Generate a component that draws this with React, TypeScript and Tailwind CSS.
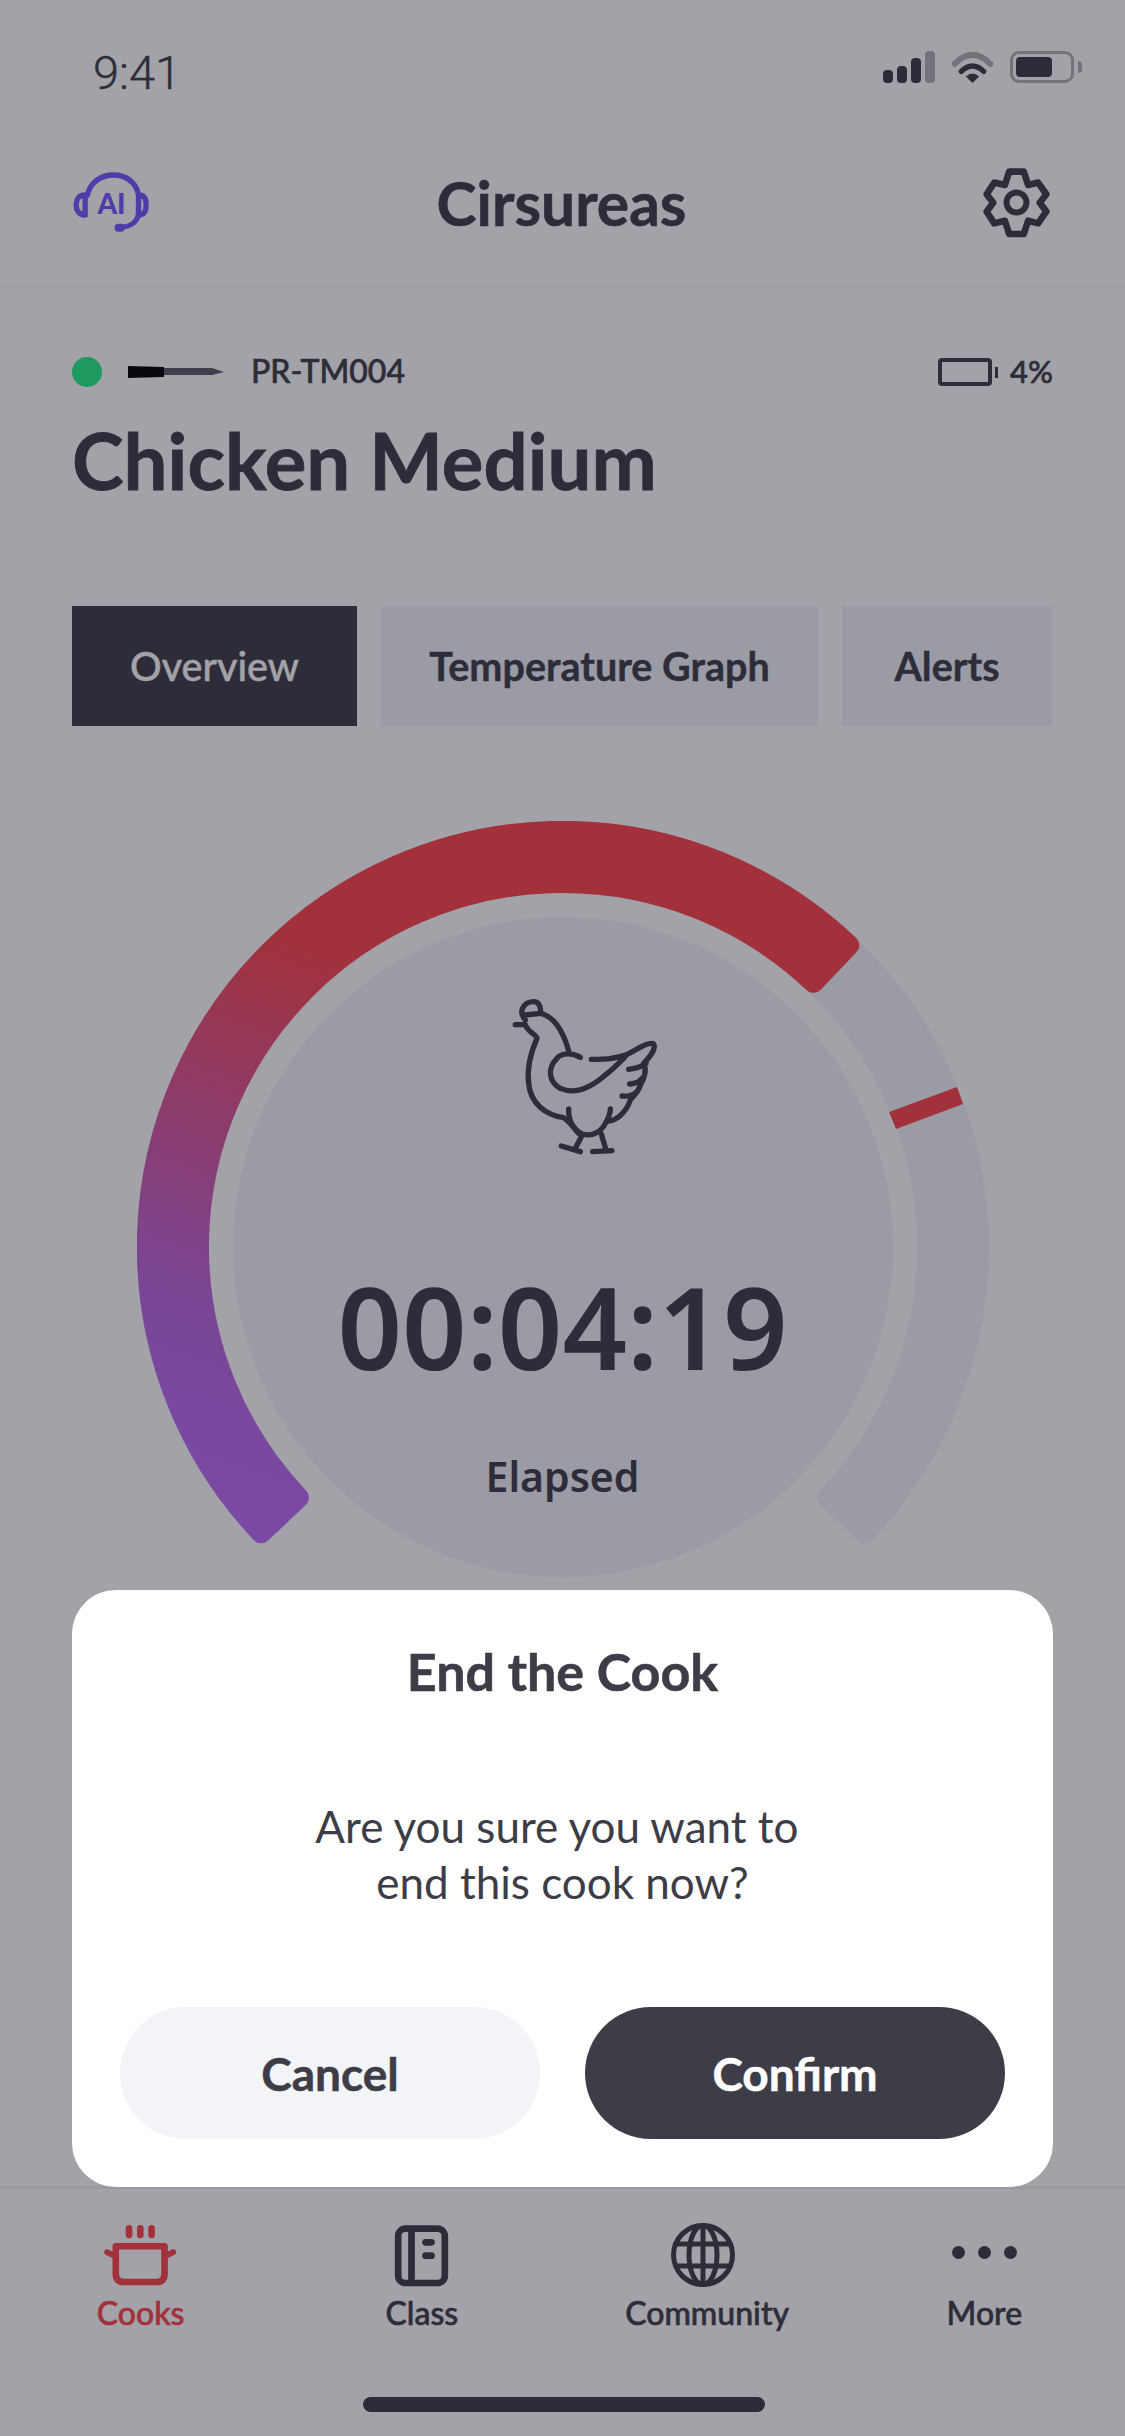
import React from 'react';

const CX = 426;
const CY = 426;

const polar = (r: number, deg: number) => {
    const a = ((deg - 90) * Math.PI) / 180;
    return `${(CX + r * Math.cos(a)).toFixed(2)} ${(CY + r * Math.sin(a)).toFixed(2)}`;
};

// ring segment, inset a bit so the stroke gives it rounded corners
const sector = (from: number, to: number) => {
    const outer = 416;
    const inner = 364;
    const large = to - from > 180 ? 1 : 0;
    return `M${polar(outer, from)} A${outer} ${outer} 0 ${large} 1 ${polar(outer, to)} L${polar(inner, to)} A${inner} ${inner} 0 ${large} 0 ${polar(inner, from)} Z`;
};

const StatusIcons = () => (
    <div className="flex items-center gap-[16px]">
        <div className="flex items-end gap-[4px] h-[32px]">
            <div className="w-[10px] h-[13px] rounded-[4px] bg-[#3d3d47]" />
            <div className="w-[10px] h-[17px] rounded-[4px] bg-[#3d3d47]" />
            <div className="w-[10px] h-[25px] rounded-[4px] bg-[#3d3d47]" />
            <div className="w-[10px] h-[32px] rounded-[4px] bg-[#3d3d47]/40" />
        </div>
        <svg width="43" height="33" viewBox="240 40 128 100" fill="none" strokeLinecap="round">
            <path d="M250 82Q304 28 358 82" stroke="#3d3d47" strokeOpacity="0.4" strokeWidth="18" />
            <path d="M270 105Q304 72 338 105" stroke="#3d3d47" strokeWidth="16" />
            <path d="M284 120Q304 102 324 120L304 140Z" fill="#3d3d47" />
        </svg>
        <div className="flex items-center gap-[4px]">
            <div className="w-[64px] h-[32px] rounded-[9px] border-[3px] border-[#3d3d47]/40 p-[3px]">
                <div className="w-[36px] h-full rounded-[4px] bg-[#3d3d47]" />
            </div>
            <div className="w-[4px] h-[12px] rounded-r-full bg-[#3d3d47]/40" />
        </div>
    </div>
);

const AiIcon = () => (
    <svg width="82" height="65" viewBox="60 95 245 195" fill="none" stroke="#7655ff" strokeWidth="16" strokeLinecap="round" strokeLinejoin="round">
        <path d="M112 170C120 130 155 110 190 110C225 110 258 130 265 170V225C262 255 240 265 205 268" />
        <path d="M105 170C85 170 78 185 78 200C78 215 85 230 105 230Z" />
        <path d="M270 170C285 172 288 185 288 200C288 215 285 228 270 230" />
        <path d="M205 268H212" strokeWidth="24" />
        <text x="184" y="226" textAnchor="middle" fill="#7655ff" stroke="none" fontFamily="Lato, sans-serif" fontWeight="900" fontSize="84">AI</text>
    </svg>
);

const GearIcon = () => (
    <svg width="73" height="73" viewBox="60 35 220 220" fill="none" stroke="#3d3d47" strokeWidth="20" strokeLinejoin="round">
        <path d="M148 52H192L205 92L235 85L260 120L240 146L260 172L235 208L205 200L192 240H148L135 200L103 208L80 172L100 146L80 120L103 85L135 92Z" />
        <circle cx="170" cy="145" r="30" strokeWidth="18" />
    </svg>
);

const Probe = () => (
    <svg width="96" height="14" viewBox="0 0 96 14">
        <path d="M0 1L36 2V12L0 13Z" fill="#000" />
        <path d="M36 3H84L96 7L84 10H36Z" fill="#5d5d66" />
    </svg>
);

const Chicken = () => (
    <svg width="220" height="220" viewBox="0 0 660 660" fill="none" stroke="#3d3d47" strokeWidth="16" strokeLinecap="round" strokeLinejoin="round">
        <path d="M190 180C165 150 190 125 215 125C232 125 238 145 235 160L190 165" />
        <path d="M160 194H190C195 215 225 225 225 235C205 280 195 330 200 370C205 430 250 465 305 473C325 485 335 505 350 520" />
        <path d="M235 160C280 170 305 220 320 272" />
        <path d="M355 292C330 278 300 278 285 295C255 325 260 365 295 385C340 405 390 380 430 345C450 330 470 310 488 292" />
        <path d="M388 298C440 300 490 290 520 270C540 258 565 245 575 252C582 265 565 290 545 310C555 330 550 350 535 375C530 395 515 405 505 420C495 450 470 480 440 483" />
        <path d="M500 328C520 325 540 320 552 310" />
        <path d="M503 372C520 370 530 368 540 355" />
        <path d="M480 408C495 410 510 408 525 395" />
        <path d="M320 447C318 480 335 510 360 522C385 530 415 520 430 490C438 475 445 465 445 447" />
        <path d="M358 530L340 565" />
        <path d="M298 558L355 575" />
        <path d="M418 522L432 570" />
        <path d="M392 575L450 572" />
    </svg>
);

const Gauge = () => (
    <div className="relative w-[852px] h-[780px] mx-auto mt-[95px]">
        <svg width="852" height="780" viewBox="0 0 852 780">
            <defs>
                <linearGradient id="heat" gradientUnits="userSpaceOnUse" x1="130" y1="660" x2="300" y2="170">
                    <stop offset="0" stopColor="#bb6cf8" />
                    <stop offset="0.3" stopColor="#bd64dc" />
                    <stop offset="1" stopColor="#ff444c" />
                </linearGradient>
            </defs>
            <circle cx={CX} cy={CY} r="330" fill="#f2f4f8" />
            <path d={sector(-133.5, 133.5)} fill="#f2f4f8" stroke="#f2f4f8" strokeWidth="20" strokeLinejoin="round" />
            <path d={sector(-133.5, 43.5)} fill="url(#heat)" stroke="url(#heat)" strokeWidth="20" strokeLinejoin="round" />
            <path d="M752 291L820 266L826 283L759 308Z" fill="#ff444c" />
        </svg>
        <div className="absolute inset-0 flex flex-col items-center">
            <div className="absolute top-[139px] left-[325px]">
                <Chicken />
            </div>
            <div className="absolute top-[430px] w-full text-center text-[113px] leading-[150px] font-semibold [font-family:'Noto_Sans',sans-serif] text-[#3d3d47]">00:04:19</div>
            <div className="absolute top-[630px] w-full text-center text-[41px] leading-[50px] font-semibold [font-family:'Noto_Sans',sans-serif] text-[#3d3d47]">Elapsed</div>
        </div>
    </div>
);

const TabIcon = ({ name }: { name: string }) => {
    if (name === 'Cooks') {
        return (
            <svg width="75" height="63" viewBox="40 35 225 190" fill="none" stroke="#ff444c" strokeWidth="20" strokeLinecap="round">
                <path d="M118 48V68M152 48V68M186 48V68" />
                <path d="M78 102H225V185Q225 210 200 210H103Q78 210 78 185Z" strokeLinejoin="round" />
                <path d="M52 120L76 132M251 120L227 132" strokeWidth="18" />
            </svg>
        );
    }
    if (name === 'Class') {
        return (
            <svg width="57" height="65" viewBox="55 40 170 195" fill="none" stroke="#3d3d47" strokeWidth="20">
                <rect x="70" y="57" width="140" height="163" rx="22" />
                <path d="M110 57V220" />
                <path d="M152 98H170M152 138H170" strokeLinecap="round" />
            </svg>
        );
    }
    if (name === 'Community') {
        return (
            <svg width="64" height="64" viewBox="0 0 64 64" fill="none" stroke="#3d3d47" strokeWidth="5">
                <circle cx="32" cy="32" r="29.5" />
                <ellipse cx="32" cy="32" rx="14" ry="29.5" />
                <path d="M32 2V62M5 21H59M5 43H59" />
            </svg>
        );
    }
    return (
        <div className="h-[62px] flex items-start pt-[22px] gap-[13px]">
            <div className="w-[13px] h-[13px] rounded-full bg-[#3d3d47]" />
            <div className="w-[13px] h-[13px] rounded-full bg-[#3d3d47]" />
            <div className="w-[13px] h-[13px] rounded-full bg-[#3d3d47]" />
        </div>
    );
};

const tabs = ['Cooks', 'Class', 'Community', 'More'];

export default function App() {
    return (
        <div className="relative w-[1125px] h-[2436px] overflow-hidden bg-white [font-family:Lato,sans-serif] text-[#3d3d47]">
            <div className="flex h-[130px] items-start justify-between pt-[50px] pl-[93px] pr-[43px]">
                <span className="text-[47px] leading-[46px] [font-family:Roboto,sans-serif] font-light [-webkit-text-stroke:0.4px_#3d3d47]">9:41</span>
                <StatusIcons />
            </div>

            <header className="flex h-[158px] items-center justify-between border-b-[3px] border-[#f7f7fa] pb-[10px] pl-[70px] pr-[72px]">
                <AiIcon />
                <h1 className="mr-[9px] text-[60.5px] leading-[70px] font-bold [-webkit-text-stroke:0.6px_#3d3d47]">Cirsureas</h1>
                <GearIcon />
            </header>

            <main className="px-[72px] pt-[69px]">
                <div className="flex h-[30px] items-center justify-between">
                    <div className="flex items-center">
                        <div className="w-[30px] h-[30px] rounded-full bg-[#23f085]" />
                        <div className="ml-[26px]"><Probe /></div>
                        <span className="ml-[27px] mb-[2px] text-[32px] font-medium [-webkit-text-stroke:0.6px_#3d3d47]">PR-TM004</span>
                    </div>
                    <div className="flex items-center">
                        <div className="w-[54px] h-[28px] rounded-[4px] border-[4px] border-[#3d3d47]" />
                        <div className="ml-[3px] w-[3px] h-[11px] bg-[#3d3d47]" />
                        <span className="ml-[12px] mb-[2px] text-[31px] font-medium [-webkit-text-stroke:0.6px_#3d3d47]">4%</span>
                    </div>
                </div>

                <h2 className="mt-[28px] text-[78px] leading-[90px] font-bold [-webkit-text-stroke:0.8px_#3d3d47]">Chicken Medium</h2>

                <div className="mt-[101px] flex gap-[24px] text-[39.5px] font-bold">
                    <div className="flex h-[120px] w-[285px] items-center justify-center bg-[#3d3d47] font-medium text-white [-webkit-text-stroke:0.4px_#fff]">Overview</div>
                    <div className="flex h-[120px] w-[437px] items-center justify-center bg-[#f2f4f8] [-webkit-text-stroke:0.4px_#3d3d47]">Temperature Graph</div>
                    <div className="flex h-[120px] w-[210px] items-center justify-center bg-[#f2f4f8] [-webkit-text-stroke:0.4px_#3d3d47]">Alerts</div>
                </div>

                <Gauge />
            </main>

            <nav className="absolute bottom-0 left-0 right-0 h-[250px] border-t-[3px] border-[#f2f2f6] bg-white">
                <div className="grid grid-cols-4 pt-[34px]">
                    {tabs.map((name) => (
                        <div key={name} className={`flex flex-col items-center gap-[6px] ${name === 'Cooks' ? 'text-[#ff444c]' : ''}`}>
                            <div className="h-[64px] flex items-center">
                                <TabIcon name={name} />
                            </div>
                            <span className={`text-[32px] leading-[40px] font-medium [-webkit-text-stroke:0.6px_currentColor] ${name === 'Community' ? 'ml-[8px]' : ''}`}>{name}</span>
                        </div>
                    ))}
                </div>
                <div className="absolute bottom-[24px] left-[363px] w-[402px] h-[15px] rounded-full bg-[#3d3d47]" />
            </nav>

            <div className="absolute inset-0 bg-[#171726]/40 pt-[1590px] px-[72px]">
                <div className="h-[597px] rounded-[44px] bg-white pt-[53px] px-[48px] text-center">
                    <h3 className="text-[52px] leading-[56px] font-bold [-webkit-text-stroke:0.6px_#3d3d47]">End the Cook</h3>
                    <p className="mt-[99px] text-[44px] leading-[56px]">Are you sure you want to&nbsp;<br />end this cook now?</p>
                    <div className="mt-[97px] flex gap-[45px]">
                        <button className="h-[132px] flex-1 rounded-full bg-[#f3f4f8] text-[46px] font-bold [-webkit-text-stroke:0.5px_#3d3d47]">Cancel</button>
                        <button className="h-[132px] flex-1 rounded-full bg-[#3d3d47] text-[46px] font-bold text-white [-webkit-text-stroke:0.5px_#fff]">Confirm</button>
                    </div>
                </div>
            </div>
        </div>
    );
}
